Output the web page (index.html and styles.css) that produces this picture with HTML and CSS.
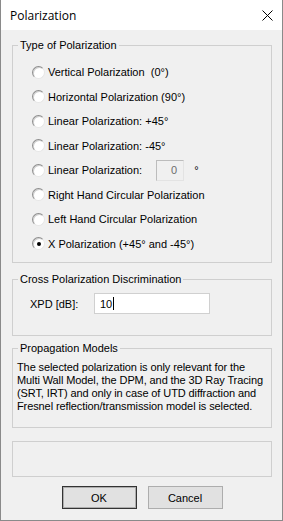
FILE: index.html
```html
<!DOCTYPE html>
<html lang="en">
<head>
    <meta charset="UTF-8">
    <meta name="viewport" content="width=device-width, initial-scale=1.0">
    <title>Polarization</title>
    <link rel="stylesheet" href="styles.css">
</head>
<body>

    <div class="window">
        <div class="titlebar">
            <span class="title">Polarization</span>
            <svg class="close" width="11" height="11" viewBox="0 0 11 11">
                <path d="M0.5 0.5 L10.5 10.5 M10.5 0.5 L0.5 10.5" stroke="#000" stroke-width="1" fill="none"/>
            </svg>
        </div>

        <div class="client">
            <fieldset class="group group-type">
                <legend>Type of Polarization</legend>
                <div class="options">
                    <div class="option"><span class="radio"></span>Vertical Polarization&nbsp; (0°)</div>
                    <div class="option"><span class="radio"></span>Horizontal Polarization (90°)</div>
                    <div class="option"><span class="radio"></span>Linear Polarization: +45°</div>
                    <div class="option"><span class="radio"></span>Linear Polarization: -45°</div>
                    <div class="option"><span class="radio"></span>Linear Polarization:<span class="angle">0</span><span class="deg">°</span></div>
                    <div class="option"><span class="radio"></span>Right Hand Circular Polarization</div>
                    <div class="option"><span class="radio"></span>Left Hand Circular Polarization</div>
                    <div class="option"><span class="radio checked"></span>X Polarization (+45° and -45°)</div>
                </div>
            </fieldset>

            <fieldset class="group group-xpd">
                <legend>Cross Polarization Discrimination</legend>
                <div class="xpd-row">
                    <span class="xpd-label">XPD [dB]:</span>
                    <span class="textbox">10<span class="caret"></span></span>
                </div>
            </fieldset>

            <fieldset class="group group-models">
                <legend>Propagation Models</legend>
                <p class="note">The selected polarization is only relevant for the<br>Multi Wall Model, the DPM, and the 3D Ray Tracing<br>(SRT, IRT) and only in case of UTD diffraction and<br>Fresnel reflection/transmission model is selected.</p>
            </fieldset>

            <div class="status"></div>

            <div class="buttons">
                <button class="btn default">OK</button>
                <button class="btn">Cancel</button>
            </div>
        </div>
    </div>

</body>
</html>
```

FILE: styles.css
```css
body {
    margin: 0;
    font-family: "Liberation Sans", Arial, sans-serif;
    font-size: 11px;
    color: #000;
    background: #fff;
}
.window {
    width: 283px;
    height: 521px;
    box-sizing: border-box;
    border: 1px solid #8a8a8a;
    border-top: none;
    background: #f0f0f0;
    display: flex;
    flex-direction: column;
}
.titlebar {
    height: 30px;
    flex: none;
    background: #fff;
    display: flex;
    align-items: center;
    justify-content: space-between;
    padding: 0 9px 0 9px;
}
.title {
    font-family: "Open Sans", "Noto Sans", sans-serif;
    font-size: 12px;
}
.close {
    display: block;
}
.client {
    flex: 1;
    padding: 0 10px 0 11px;
    display: flex;
    flex-direction: column;
}

/* Group boxes */
.group {
    margin: 0;
    padding: 0;
    border: 1px solid #cfcfcf;
    min-width: 0;
    flex: none;
}
.group legend {
    margin-left: 5px;
    padding: 0 2px;
    line-height: 13px;
}
.group-type {
    margin-top: 9px;
}
.group-xpd {
    margin-top: 10px;
}
.group-models {
    margin-top: 6px;
}

.options {
    padding: 8px 0 6px 19px;
}
.option {
    height: 24.5px;
    display: flex;
    align-items: center;
    white-space: nowrap;
}
.radio {
    width: 13px;
    height: 13px;
    box-sizing: border-box;
    border-radius: 50%;
    border: 1px solid;
    border-color: #8e8e8e #e6e6e6 #e6e6e6 #8e8e8e;
    background: #fff;
    box-shadow: inset 1px 1px 0 #d0d0d0;
    margin-right: 3px;
    display: flex;
    align-items: center;
    justify-content: center;
    flex: none;
}
.radio.checked::after {
    content: "";
    width: 4px;
    height: 4px;
    border-radius: 50%;
    background: #000;
}
.angle {
    width: 28px;
    height: 21px;
    box-sizing: border-box;
    margin-left: 14px;
    border: 1px solid;
    border-color: #bcbcbc #e3e3e3 #e3e3e3 #bcbcbc;
    color: #6d6d6d;
    display: flex;
    align-items: center;
    justify-content: flex-end;
    padding-right: 6px;
}
.deg {
    margin-left: 10px;
}

.xpd-row {
    display: flex;
    align-items: center;
    padding: 7px 0 21px 17px;
}
.xpd-label {
    width: 64px;
}
.textbox {
    width: 116px;
    height: 21px;
    box-sizing: border-box;
    background: #fff;
    border: 1px solid #d0d0d0;
    display: flex;
    align-items: center;
    padding-left: 5px;
}
.caret {
    width: 1px;
    height: 13px;
    background: #000;
    margin-left: 1px;
}

.note {
    margin: 0;
    padding: 6px 0 14px 4px;
    line-height: 13px;
    white-space: nowrap;
    letter-spacing: -0.1px;
}

.status {
    margin-top: 13px;
    height: 36px;
    flex: none;
    box-sizing: border-box;
    border: 1px solid #cfcfcf;
}

.buttons {
    margin-top: 9px;
    display: flex;
    justify-content: center;
    gap: 11px;
}
.btn {
    width: 75px;
    height: 23px;
    font-family: "Liberation Sans", Arial, sans-serif;
    font-size: 11px;
    color: #000;
    background: #e1e1e1;
    border: 1px solid #adadad;
    padding: 0;
}
.btn.default {
    border: 1px solid #333;
    box-shadow: inset 0 0 0 1px #adadad;
}
```
